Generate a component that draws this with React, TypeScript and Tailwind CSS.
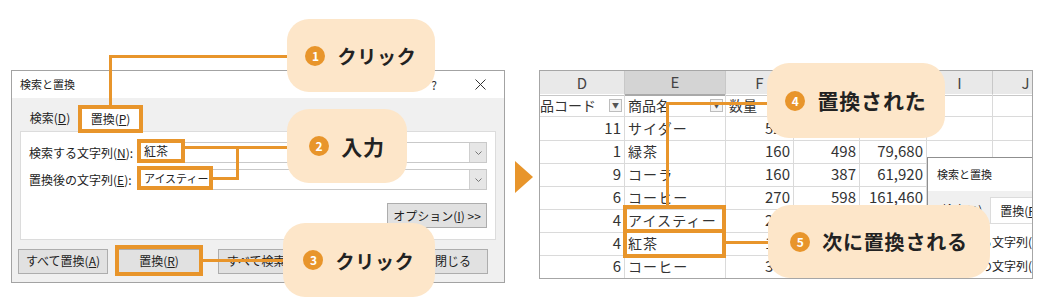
import type { ReactNode } from "react";

// 吹き出し（番号つき）
function Bubble({ n, label, className, text }: { n: number; label: string; className: string; text: string }) {
  return (
    <div className={`absolute flex items-center justify-center gap-[12px] rounded-[22px] bg-[#fde6c9] ${className}`}>
      <span className="flex h-[20px] w-[20px] items-center justify-center rounded-full bg-[#e8952b] text-[12px] font-bold leading-none text-white">
        {n}
      </span>
      <span className={`font-bold leading-none tracking-[0.04em] text-[#222] ${text}`}>{label}</span>
    </div>
  );
}

function Btn({ children, className }: { children: ReactNode; className: string }) {
  return (
    <div className={`flex h-[25px] shrink-0 items-center justify-center border border-[#adadad] bg-[#e1e1e1] text-[12px] text-[#222] ${className}`}>
      {children}
    </div>
  );
}

function Field({ label }: { label: ReactNode }) {
  return (
    <div className="flex h-[21px] items-center">
      <div className="w-[109px] shrink-0 text-[12px] text-[#222]">{label}</div>
      <div className="flex h-[21px] flex-1 items-stretch justify-end border border-[#c9c9c9] bg-white">
        <div className="flex w-[17px] items-center justify-center border-l border-[#cfcfcf] bg-[#e6e6e6]">
          <svg width="7" height="4" viewBox="0 0 7 4" fill="none" stroke="#777" strokeWidth="1">
            <path d="M0.5 0.5 3.5 3.5 6.5 0.5" />
          </svg>
        </div>
      </div>
    </div>
  );
}

function Dd() {
  return (
    <span className="flex h-[13px] w-[13px] shrink-0 items-center justify-center border border-[#bdbdbd] bg-[#f4f4f4] text-[7px] text-[#555]">
      ▼
    </span>
  );
}

const cols = ["D", "E", "F", "G", "H", "I", "J"];

const rows: string[][] = [
  ["11", "サイダー", "520", "310", "161,200", "", ""],
  ["1", "緑茶", "160", "498", "79,680", "", ""],
  ["9", "コーラ", "160", "387", "61,920", "", ""],
  ["6", "コーヒー", "270", "598", "161,460", "", ""],
  ["4", "アイスティー", "240", "412", "98,880", "", ""],
  ["4", "紅茶", "180", "356", "64,080", "", ""],
  ["6", "コーヒー", "300", "275", "82,500", "", ""],
];

const grid = "grid grid-cols-[85px_101px_68px_66px_67px_66px_66px]";

export default function App() {
  return (
    <div className="relative h-[307px] w-[1042px] overflow-hidden bg-white font-['Noto_Sans_CJK_JP','Noto_Sans',sans-serif] text-[#222]">
      <div className="flex items-start pl-[11px] pt-[70px]">
        {/* ── 検索と置換ダイアログ ── */}
        <div className="flex h-[213px] w-[494px] shrink-0 flex-col border border-[#a3a3a3]">
          <div className="flex h-[27px] items-center justify-between bg-white pl-[8px] pr-[18px]">
            <span className="text-[11px]">検索と置換</span>
            <div className="flex items-center gap-[38px] text-[#333]">
              <span className="text-[12px]">?</span>
              <svg width="11" height="11" viewBox="0 0 11 11" fill="none" stroke="#333" strokeWidth="1">
                <path d="M0.5 0.5 10.5 10.5M10.5 0.5 0.5 10.5" />
              </svg>
            </div>
          </div>
          <div className="flex flex-1 flex-col bg-[#f0f0f0] px-[8px]">
            <div className="flex h-[33px] items-end text-[12px]">
              <div className="flex h-[26px] w-[60px] items-center justify-center">
                検索(<u>D</u>)
              </div>
              <div className="flex h-[26px] w-[61px] items-center justify-center border border-b-0 border-[#dcdcdc] bg-white">
                置換(<u>P</u>)
              </div>
            </div>
            <div className="flex h-[109px] flex-col border border-[#dcdcdc] bg-white px-[8px] pt-[10px]">
              <Field label={<>検索する文字列(<u>N</u>):</>} />
              <div className="mt-[6px]">
                <Field label={<>置換後の文字列(<u>E</u>):</>} />
              </div>
              <Btn className="mt-[13px] w-[100px] self-end text-[11px]">
                オプション(<u>I</u>) &gt;&gt;
              </Btn>
            </div>
            <div className="-ml-[2px] flex flex-1 items-center">
              <Btn className="w-[90px]">
                すべて置換(<u>A</u>)
              </Btn>
              <Btn className="ml-[10px] w-[82px]">
                置換(<u>R</u>)
              </Btn>
              <Btn className="ml-[18px] w-[88px]">
                すべて検索(<u>I</u>)
              </Btn>
              <Btn className="ml-[10px] w-[88px]">
                次を検索(<u>F</u>)
              </Btn>
              <Btn className="ml-[14px] w-[70px]">閉じる</Btn>
            </div>
          </div>
        </div>

        {/* ── 矢印 ── */}
        <div className="flex h-[213px] w-[34px] shrink-0 items-center pl-[10px]">
          <div className="h-0 w-0 border-y-[16px] border-l-[18px] border-y-transparent border-l-[#e8952b]" />
        </div>

        {/* ── ワークシート ── */}
        <div className="relative h-[209px] w-[494px] shrink-0 overflow-hidden border border-[#a6a6a6] bg-white text-[14px] text-[#333]">
          <div className={`${grid} h-[23px] bg-[#e9e9e9] text-[15px] text-[#444]`}>
            {cols.map((c) => (
              <div
                key={c}
                className={
                  c === "E"
                    ? "flex items-center justify-center border-b-2 border-r border-b-[#a9a9a9] border-r-[#c8c8c8] bg-[#d4d4d4]"
                    : "flex items-center justify-center border-b border-r border-[#c8c8c8]"
                }
              >
                {c}
              </div>
            ))}
          </div>
          <div className={`${grid} h-[23px]`}>
            <div className="flex items-center justify-between border-b border-r border-[#dadada] pr-[2px]">
              <span>品コード</span>
              <Dd />
            </div>
            <div className="flex items-center justify-between border-b border-r border-[#dadada] pl-[3px] pr-[2px]">
              <span>商品名</span>
              <Dd />
            </div>
            <div className="flex items-center border-b border-r border-[#dadada] pl-[3px]">数量</div>
            {["G", "H", "I", "J"].map((k) => (
              <div key={k} className="border-b border-r border-[#dadada]" />
            ))}
          </div>
          {rows.map((r, i) => (
            <div key={i} className={`${grid} h-[23px]`}>
              {r.map((v, j) => (
                <div
                  key={j}
                  className={
                    j === 1
                      ? "flex items-center border-b border-r border-[#dadada] pl-[3px] tracking-[0.08em]"
                      : "flex items-center justify-end border-b border-r border-[#dadada] pr-[3px] text-[15px]"
                  }
                >
                  {v}
                </div>
              ))}
            </div>
          ))}

          {/* 右下に重なった検索と置換ダイアログ */}
          <div className="absolute left-[387px] top-[86px] flex h-[140px] w-[130px] flex-col border-l border-t border-[#8f8f8f] bg-[#f0f0f0] text-[12px] text-[#222]">
            <div className="flex h-[33px] items-center bg-white pl-[9px] text-[11px]">検索と置換</div>
            <div className="flex h-[32px] items-end pl-[6px]">
              <div className="flex h-[26px] w-[56px] items-center justify-center">
                検索(<u>D</u>)
              </div>
              <div className="flex h-[26px] w-[60px] items-center justify-center border border-b-0 border-[#dcdcdc] bg-white">
                置換(<u>P</u>)
              </div>
            </div>
            <div className="ml-[6px] flex flex-1 flex-col gap-[6px] border border-[#dcdcdc] bg-white pl-[9px] pt-[9px]">
              <div className="whitespace-nowrap">
                検索する文字列(<u>N</u>):
              </div>
              <div className="whitespace-nowrap">
                置換後の文字列(<u>E</u>):
              </div>
            </div>
          </div>
        </div>
      </div>

      {/* ── 強調枠 ── */}
      <div className="absolute left-[78px] top-[105px] h-[28px] w-[65px] border-[4px] border-[#e8952b]" />
      <div className="absolute left-[137px] top-[139px] flex h-[24px] w-[48px] items-center border-[4px] border-[#e8952b] bg-white pl-[3px] text-[12px]">
        紅茶
      </div>
      <div className="absolute left-[137px] top-[166px] flex h-[24px] w-[76px] items-center border-[4px] border-[#e8952b] bg-white pl-[3px] text-[11px]">
        アイスティー
      </div>
      <div className="absolute left-[115px] top-[245px] h-[31px] w-[88px] border-[4px] border-[#e8952b]" />
      <div className="absolute left-[623px] top-[205px] h-[28px] w-[103px] border-[4px] border-[#e8952b]" />
      <div className="absolute left-[623px] top-[229px] h-[29px] w-[103px] border-[4px] border-[#e8952b]" />

      {/* ── 引き出し線 ── */}
      <div className="absolute left-[109px] top-[55px] h-[3px] w-[180px] bg-[#e8952b]" />
      <div className="absolute left-[109px] top-[55px] h-[51px] w-[3px] bg-[#e8952b]" />
      <div className="absolute left-[185px] top-[146px] h-[3px] w-[104px] bg-[#e8952b]" />
      <div className="absolute left-[236px] top-[146px] h-[34px] w-[3px] bg-[#e8952b]" />
      <div className="absolute left-[213px] top-[177px] h-[3px] w-[26px] bg-[#e8952b]" />
      <div className="absolute left-[203px] top-[259px] h-[3px] w-[82px] bg-[#e8952b]" />
      <div className="absolute left-[666px] top-[102px] h-[3px] w-[103px] bg-[#e8952b]" />
      <div className="absolute left-[666px] top-[102px] h-[104px] w-[3px] bg-[#e8952b]" />
      <div className="absolute left-[726px] top-[241px] h-[3px] w-[44px] bg-[#e8952b]" />

      {/* ── 吹き出し ── */}
      <Bubble n={1} label="クリック" className="left-[287px] top-[19px] h-[73px] w-[148px]" text="text-[19px]" />
      <Bubble n={2} label="入力" className="left-[287px] top-[109px] h-[74px] w-[120px]" text="text-[21px]" />
      <Bubble n={3} label="クリック" className="left-[283px] top-[223px] h-[74px] w-[152px]" text="text-[19px]" />
      <Bubble n={4} label="置換された" className="left-[767px] top-[63px] h-[75px] w-[178px]" text="text-[21px]" />
      <Bubble n={5} label="次に置換される" className="left-[768px] top-[205px] h-[73px] w-[222px]" text="text-[20px]" />
    </div>
  );
}
